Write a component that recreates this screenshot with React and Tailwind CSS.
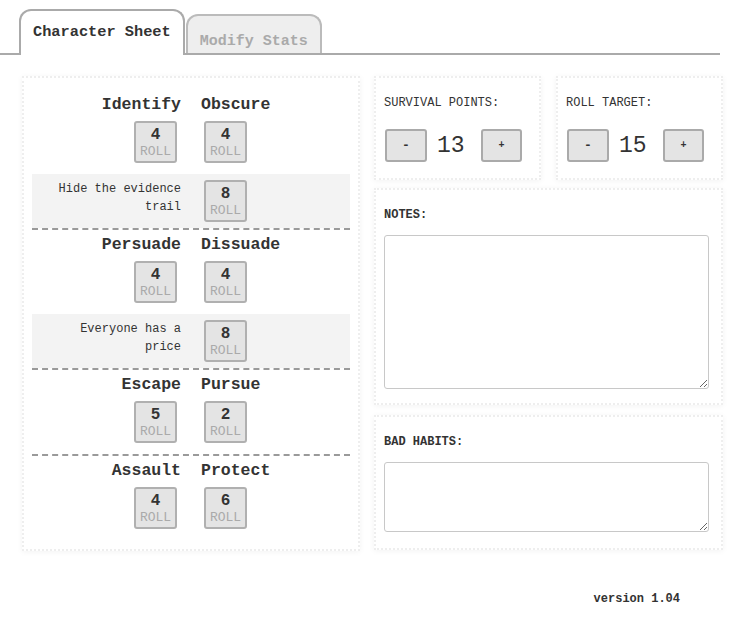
import React from "react";

const font = "font-['Liberation_Mono','Courier_New',monospace]";

const blocks = [
  { left: ["Identify", 4], right: ["Obscure", 4], special: ["Hide the evidence trail", 8] },
  { left: ["Persuade", 4], right: ["Dissuade", 4], special: ["Everyone has a price", 8] },
  { left: ["Escape", 5], right: ["Pursue", 2] },
  { left: ["Assault", 4], right: ["Protect", 6], last: true },
];

const RollButton = ({ value, className = "" }) => (
  <button
    className={`flex h-[42px] w-[43px] flex-col items-center justify-start rounded-[3px] border-2 border-[#b0b0b0] bg-[#e4e4e4] pt-[3px] ${className}`}>
    <span className="text-[16px] font-bold leading-[18px] text-[#333]">{value}</span>
    <span className="text-[13px] leading-[15px] text-[#aaa]">ROLL</span>
  </button>
);

const StatBlock = ({ block }) => (
  <div className={block.last ? "" : "border-b-2 border-dashed border-[#9a9a9a]"}>
    <div className="grid grid-cols-2 gap-x-[20px] pt-[4px] pb-[11px]">
      <div className="flex flex-col items-end">
        <div className="text-[16.5px] font-bold leading-[22px] text-[#333]">{block.left[0]}</div>
        <RollButton value={block.left[1]} className="mt-[5px] mr-[4px]" />
      </div>
      <div className="flex flex-col items-start">
        <div className="text-[16.5px] font-bold leading-[22px] text-[#333]">{block.right[0]}</div>
        <RollButton value={block.right[1]} className="mt-[5px] ml-[3px]" />
      </div>
    </div>
    {block.special && (
      <div className="grid grid-cols-2 gap-x-[20px] bg-[#f3f3f3] py-[6px]">
        <div className="flex justify-end">
          <div className="w-[130px] text-right text-[12px] leading-[18px] text-[#333]">
            {block.special[0]}
          </div>
        </div>
        <div>
          <RollButton value={block.special[1]} className="ml-[3px]" />
        </div>
      </div>
    )}
  </div>
);

const Counter = ({ label, value }) => (
  <div className="w-[167px] border-2 border-dotted border-[#eee] bg-white px-[8px] pt-[17px] pb-[16px] shadow-[0_1px_6px_rgba(0,0,0,0.05)]">
    <div className="text-[12px] leading-[16px] text-[#333]">{label}</div>
    <div className="mt-[18px] flex items-center pl-[1px]">
      <button className="h-[33px] w-[42px] rounded-[3px] border-2 border-[#aaa] bg-[#e4e4e4] text-[13px] font-bold text-[#333]">
        -
      </button>
      <span className="ml-[10px] w-[28px] text-[23px] leading-[28px] text-[#333]">{value}</span>
      <button className="ml-[16px] h-[33px] w-[41px] rounded-[3px] border-2 border-[#aaa] bg-[#e4e4e4] text-[10px] font-bold text-[#333]">
        +
      </button>
    </div>
  </div>
);

const TextCard = ({ label, height, className = "" }) => (
  <div className={`border-2 border-dotted border-[#eee] bg-white pt-[17px] pr-[12px] pl-[8px] shadow-[0_1px_6px_rgba(0,0,0,0.05)] ${className}`}>
    <div className="text-[12px] font-bold leading-[16px] text-[#333]">{label}</div>
    <textarea
      className={`mt-[12px] block w-full rounded-[3px] border border-[#c8c8c8] bg-white ${height}`}
    />
  </div>
);

export default function App() {
  return (
    <div className={`min-h-[624px] w-[745px] bg-white ${font}`}>
      {/* Tabs */}
      <div className="flex h-[55px] w-[720px] items-end border-b-2 border-[#aaa] pl-[19px]">
        <div className="-mb-[2px] h-[46px] rounded-t-[12px] border-2 border-b-0 border-[#aaa] bg-white px-[12px] pt-[11px] text-[15.3px] font-bold leading-[20px] text-[#333]">
          Character Sheet
        </div>
        <div className="ml-[1px] h-[39px] rounded-t-[12px] border-2 border-b-0 border-[#bbb] bg-[#eee] px-[12px] pt-[16px] text-[15px] font-bold leading-[20px] text-[#aaa]">
          Modify Stats
        </div>
      </div>

      {/* Main */}
      <div className="mt-[21px] flex items-start pl-[22px]">
        <div className="w-[338px] border-2 border-dotted border-[#eee] bg-white px-[8px] pt-[12px] pb-[9px] shadow-[0_1px_6px_rgba(0,0,0,0.05)]">
          {blocks.map((b, i) => (
            <StatBlock key={i} block={b} />
          ))}
        </div>

        <div className="ml-[14px] w-[349px]">
          <div className="flex gap-[15px]">
            <Counter label="SURVIVAL POINTS:" value={13} />
            <Counter label="ROLL TARGET:" value={15} />
          </div>
          <TextCard label="NOTES:" height="h-[154px]" className="mt-[8px] pb-[14px]" />
          <TextCard label="BAD HABITS:" height="h-[70px]" className="mt-[10px] pb-[16px]" />
        </div>
      </div>

      {/* Footer */}
      <div className="mt-[40px] pr-[65px] text-right text-[12px] font-bold leading-[16px] text-[#333]">
        version 1.04
      </div>
    </div>
  );
}
